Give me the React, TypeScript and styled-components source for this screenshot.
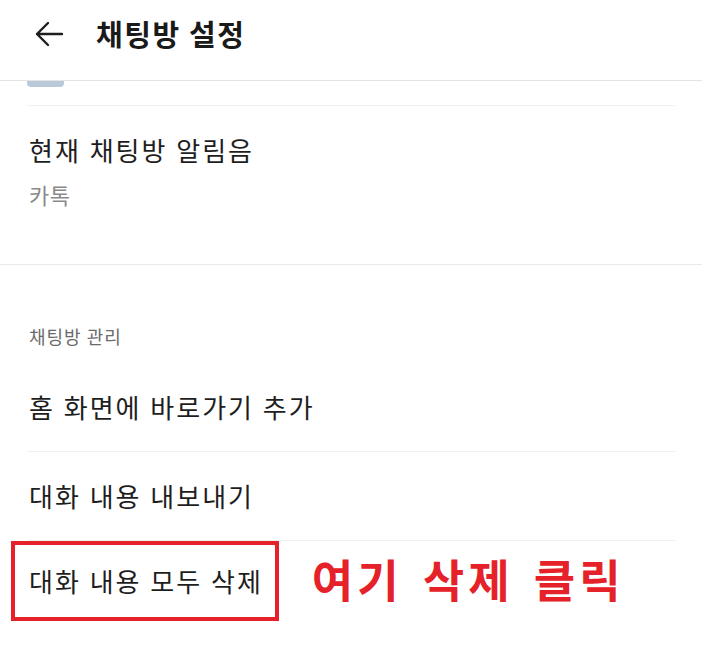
import styled, { createGlobalStyle } from 'styled-components';

const GlobalStyle = createGlobalStyle`
    html, body {
        margin: 0;
        padding: 0;
        background: #ffffff;
    }

    body {
        font-family: 'Noto Sans CJK KR', 'Noto Sans', sans-serif;
        color: #1e1e1e;
        overflow: hidden;
    }
`;

const Screen = styled.div`
    width: 702px;
    height: 652px;
    background: #ffffff;
    overflow: hidden;
`;

const Header = styled.header`
    display: flex;
    align-items: center;
    height: 80px;
    padding-left: 33px;
    border-bottom: 1px solid #e4e4e4;
`;

const BackButton = styled.button`
    display: flex;
    align-items: center;
    justify-content: center;
    width: 32px;
    height: 32px;
    padding: 0;
    margin-top: -12px;
    border: none;
    background: transparent;
    cursor: pointer;
`;

const Title = styled.h1`
    margin: -14px 0 0 31px;
    font-size: 29px;
    line-height: 36px;
    font-weight: 700;
    color: #1a1a1a;
    letter-spacing: 1.6px;
`;

/* bottom of the previous item's thumbnail, scrolled under the header */
const ClippedThumb = styled.div`
    width: 37px;
    height: 6px;
    margin-left: 27px;
    background: #b9c9da;
    border-radius: 0 0 4px 4px;
`;

const Divider = styled.div<{ $full?: boolean; $top?: number }>`
    height: 1px;
    margin: ${({ $top = 0, $full }) => `${$top}px ${$full ? 0 : 27}px 0`};
    background: ${({ $full }) => ($full ? '#e9e9e9' : '#f1f1f1')};
`;

const SettingBlock = styled.div`
    display: flex;
    flex-direction: column;
    gap: 11px;
    padding: 26px 29px 55px;
`;

const Label = styled.div`
    font-size: 26px;
    line-height: 36px;
    color: #1e1e1e;
    letter-spacing: 2px;
    word-spacing: 1px;
    white-space: nowrap;
`;

const Value = styled.div`
    font-size: 22px;
    line-height: 30px;
    color: #8a8a8a;
    letter-spacing: 0.5px;
`;

const SectionTitle = styled.div`
    padding: 58px 29px 0;
    font-size: 18px;
    line-height: 26px;
    color: #6b6b6b;
    letter-spacing: 1px;
`;

const Row = styled.div<{ $first?: boolean }>`
    display: flex;
    align-items: center;
    height: 88px;
    margin-top: ${({ $first }) => ($first ? 14 : 0)}px;
    padding: 0 29px;
`;

const HighlightRow = styled.div`
    display: flex;
    align-items: center;
    padding: 0 0 0 11px;
`;

const HighlightBox = styled.div`
    display: flex;
    align-items: center;
    height: 72px;
    padding: 0 12px 0 14px;
    border: 4px solid #e5222a;
`;

const Note = styled.span`
    margin-left: 33px;
    margin-top: -4px;
    font-size: 45px;
    line-height: 52px;
    font-weight: 700;
    color: #e5222a;
    letter-spacing: 4px;
    word-spacing: 6px;
    white-space: nowrap;
`;

const ArrowLeft = () => (
    <svg width="30" height="30" viewBox="0 0 30 30" fill="none">
        <path
            d="M28 15H3M14 4L3 15l11 11"
            stroke="#1e1e1e"
            strokeWidth="2.4"
            strokeLinecap="round"
            strokeLinejoin="round"
        />
    </svg>
);

const manageItems = ['홈 화면에 바로가기 추가', '대화 내용 내보내기'];

export default function App() {
    return (
        <>
            <GlobalStyle />
            <Screen>
                <Header>
                    <BackButton aria-label="뒤로">
                        <ArrowLeft />
                    </BackButton>
                    <Title>채팅방 설정</Title>
                </Header>

                <ClippedThumb />
                <Divider $top={18} />

                <SettingBlock>
                    <Label>현재 채팅방 알림음</Label>
                    <Value>카톡</Value>
                </SettingBlock>

                <Divider $full />

                <SectionTitle>채팅방 관리</SectionTitle>

                {manageItems.map((item, index) => (
                    <div key={item}>
                        <Row $first={index === 0}>
                            <Label>{item}</Label>
                        </Row>
                        <Divider />
                    </div>
                ))}

                <HighlightRow>
                    <HighlightBox>
                        <Label>대화 내용 모두 삭제</Label>
                    </HighlightBox>
                    <Note>여기 삭제 클릭</Note>
                </HighlightRow>
            </Screen>
        </>
    );
}
